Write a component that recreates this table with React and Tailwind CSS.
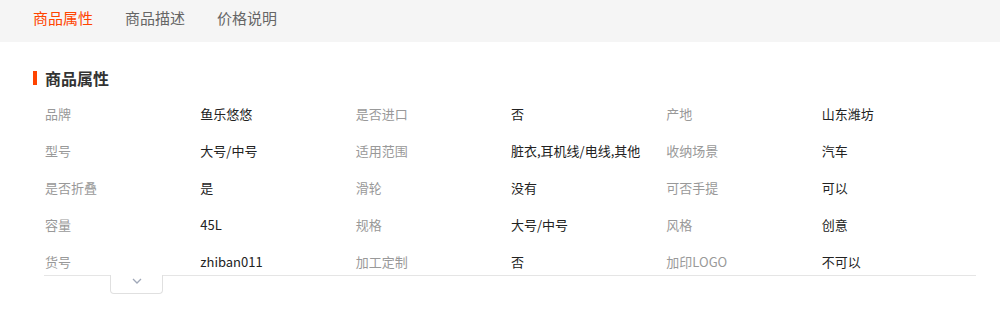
import { useState } from 'react';

const tabs = ['商品属性', '商品描述', '价格说明'];

const attrs = [
  ['品牌', '鱼乐悠悠', '是否进口', '否', '产地', '山东潍坊'],
  ['型号', '大号/中号', '适用范围', '脏衣,耳机线/电线,其他', '收纳场景', '汽车'],
  ['是否折叠', '是', '滑轮', '没有', '可否手提', '可以'],
  ['容量', '45L', '规格', '大号/中号', '风格', '创意'],
  ['货号', 'zhiban011', '加工定制', '否', '加印LOGO', '不可以'],
];

export default function App() {
  const [active, setActive] = useState(0);
  const [open, setOpen] = useState(false);

  return (
    <div
      className="w-[1000px] h-[320px] bg-white overflow-hidden"
      style={{ fontFamily: '"Microsoft YaHei", "Noto Sans CJK SC", "Liberation Sans", sans-serif' }}
    >
      {/* tabs */}
      <div className="h-[42px] bg-[#f5f5f5] flex items-start pl-[33px] gap-[32px]">
        {tabs.map((t, i) => (
          <button
            key={t}
            onClick={() => setActive(i)}
            className={`pt-[7px] text-[15px] leading-[22px] cursor-pointer ${
              i === active ? 'text-[#ff4400]' : 'text-[#666]'
            }`}
          >
            {t}
          </button>
        ))}
      </div>

      {/* section heading */}
      <div className="flex items-center gap-[8px] pl-[33px] mt-[27px]">
        <span className="w-[4px] h-[14px] bg-[#ff4400]" />
        <h3 className="text-[16px] leading-[18px] font-bold text-[#333]">商品属性</h3>
      </div>

      <div className="relative ml-[44px] mr-[24px] mt-[8px]">
        <div className={`border-b border-[#e5e5e5] overflow-hidden ${open ? '' : 'h-[181px]'}`}>
          {attrs.map((row, r) => (
            <div key={r} className="grid grid-cols-6 h-[37px] items-center text-[13px] leading-[18px]">
              {row.map((cell, c) => (
                <div key={c} className={`pl-[1px] ${c % 2 === 0 ? 'text-[#999]' : 'text-[#222]'}`}>
                  {cell}
                </div>
              ))}
            </div>
          ))}
        </div>
        <button
          onClick={() => setOpen(!open)}
          className="absolute left-[66px] bottom-[-18px] w-[53px] h-[19px] bg-white border border-t-0 border-[#e0e0e0] rounded-b-[4px] flex justify-center pt-[3px] cursor-pointer"
        >
          <svg width="10" height="6" viewBox="0 0 10 6" fill="none">
            <polyline points="1,1 5,5 9,1" stroke="#a0a8b8" strokeWidth="1.3" />
          </svg>
        </button>
      </div>
    </div>
  );
}
